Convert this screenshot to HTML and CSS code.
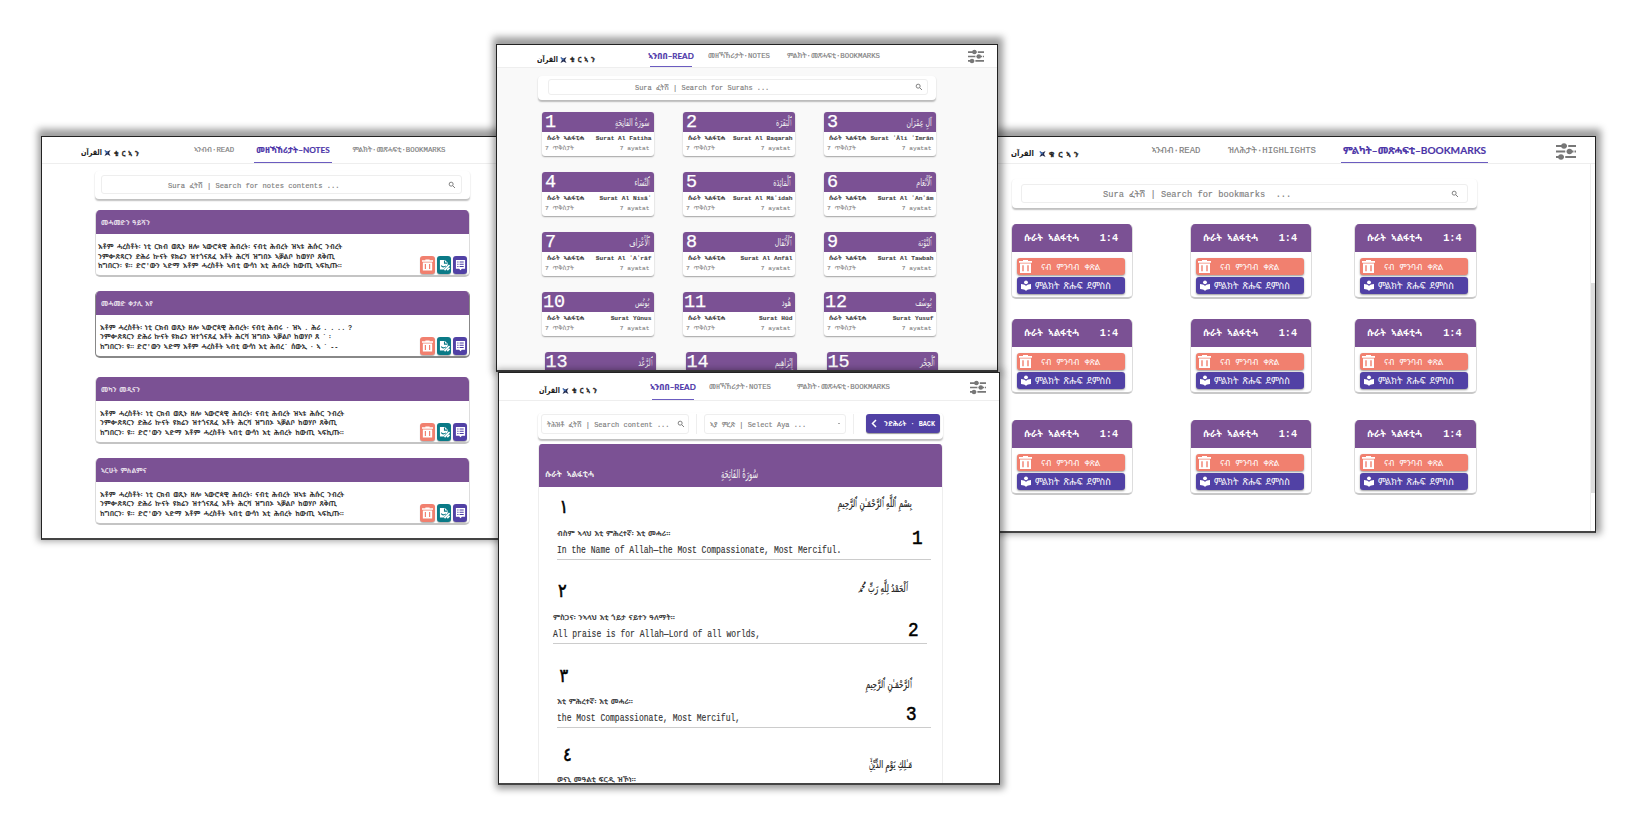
FILE: index.html
```html
<!DOCTYPE html>
<html lang="ti">
<head>
<meta charset="utf-8">
<title>القرآن ቁርኣን</title>
<link rel="stylesheet" href="styles.css">
</head>
<body>
<svg class="defs" aria-hidden="true">
  <symbol id="search" viewBox="0 0 24 24"><path fill="none" stroke="currentColor" stroke-width="2.8" d="M9.5 3.5a6 6 0 1 1 0 12a6 6 0 1 1 0-12M14 14l7 7"/></symbol>
  <symbol id="tune" viewBox="0 0 20 17"><path stroke="currentColor" stroke-width="2" d="M0 3h20M0 8.5h17.500M18.500 8.500h1.500M0 14h20"/><path stroke="#fff" stroke-width="1.500" d="M11.500 1.500v3M10 7v3M8.500 12.500v3"/><circle cx="8" cy="3" r="2.800" fill="currentColor"/><circle cx="13.500" cy="8.500" r="2.800" fill="currentColor"/><circle cx="5" cy="14" r="2.800" fill="currentColor"/></symbol>
  <symbol id="trash" viewBox="0 0 13 13"><path fill="currentColor" fill-rule="evenodd" d="M0 1h4V0h5v1h4v1.700H0zM1 3.500h11V13H1zM3.300 5.200v6h1.400v-6zM8.300 5.200v6h1.400v-6z"/></symbol>
  <symbol id="edit" viewBox="0 0 12 13"><path fill="currentColor" d="M1 1h5.500L9.500 4v2.500L5 11.500H1z"/><path stroke="#0a7a87" stroke-width="1.200" fill="none" d="M6 1.500v3h3M2.500 7c1 2 3 2 5 .500"/><path stroke="currentColor" stroke-width="1.800" d="M6 12l5.500-5.500M9 12l2.500-2.500"/></symbol>
  <symbol id="list" viewBox="0 0 12 13"><path fill="currentColor" d="M1 1h10v9.500H7.500L6 12.200 4.500 10.500H1z"/><path stroke="#4a3aa5" stroke-width="1.100" d="M2.500 3.300h1.300M5 3.300h4.500M2.500 5.700h1.300M5 5.700h4.500M2.500 8.100h1.300M5 8.100h4.500"/></symbol>
  <symbol id="reader" viewBox="0 0 12 11"><circle cx="6" cy="2.300" r="1.900" fill="currentColor"/><path fill="currentColor" d="M1 4c2 0 4 .700 5 1.900C7 4.700 9 4 11 4v5c-2 0-4 .700-5 1.900C5 9.700 3 9 1 9z"/></symbol>
  <symbol id="mark" viewBox="0 0 8 8"><path fill="#222b4d" d="M0 0l4 2 4-2-2 4 2 4-4-2-4 2 2-4z"/><path stroke="#4a7fd0" stroke-width="1.400" d="M.5 1l3.500 3"/></symbol>
</svg>

<section class="window notes">
  <header class="bar">
    <div class="logo"><b>القرآن</b><svg><use href="#mark"/></svg><span>ቁርኣን</span></div>
    <nav><a class="t1">ኣንብብ·READ</a><a class="t2 on">መዘኻኸሪታት–NOTES</a><a class="t3">ምልክት·መጽሓፍቲ·BOOKMARKS</a></nav>
  </header>
  <div class="finder"><div class="field"><span>Sura ፈትሽ | Search for notes contents ...</span><svg><use href="#search"/></svg></div></div>
  <article class="note"><h3>መሓመድን ዓይሻን</h3><div class="nbody"><p>እቶም ሓረስቶት፡ ነቲ ርክብ ወጺኑ ዘሎ ኣውሮጳዊ ሕብረት፡ ናብቲ ሕብረት ዝኣቱ ሕሱር ንብረት<br>ንምቍጽጻርን ድሕሪ ኵናት ዩክሬን ዝተጎናጸፈ እቶት ሕርሻ ዝግበኦ ኣቓልቦ ከወሃቦ ጸቅጢ<br>ከግበርን፡ ዩ። ድሮ'ውን ኣድማ እቶም ሓረስቶት ኣብቲ ውሳነ እቲ ሕብረት ከውጢ ኣፍኪጡ።</p><div class="acts"><i class="del"><svg><use href="#trash"/></svg></i><i class="ed"><svg><use href="#edit"/></svg></i><i class="ls"><svg><use href="#list"/></svg></i></div></div></article>
  <article class="note n2"><h3>መሓመድ ቀታሊ እየ</h3><div class="nbody"><p>እቶም ሓረስቶት፡ ነቲ ርክብ ወጺኑ ዘሎ ኣውሮጳዊ ሕብረት፡ ናብቲ ሕብሩ · ዝኣ . ሕሪ . . .. ?<br>ንምቍጽጻርን ድሕሪ ኵናት ዩክሬን ዝተጎናጸፈ እቶት ሕርሻ ዝግበኦ ኣቓልቦ ከወሃቦ ጸ ˙ ፡<br>ከግበርን፡ ዩ። ድሮ'ውን ኣድማ እቶም ሓረስቶት ኣብቲ ውሳነ እቲ ሕብረ` ሰውኢ · ኣ ˙ --</p><div class="acts"><i class="del"><svg><use href="#trash"/></svg></i><i class="ed"><svg><use href="#edit"/></svg></i><i class="ls"><svg><use href="#list"/></svg></i></div></div></article>
  <article class="note n3"><h3>መካን መዲናን</h3><div class="nbody"><p>እቶም ሓረስቶት፡ ነቲ ርክብ ወጺኑ ዘሎ ኣውሮጳዊ ሕብረት፡ ናብቲ ሕብረት ዝኣቱ ሕሱር ንብረት<br>ንምቍጽጻርን ድሕሪ ኵናት ዩክሬን ዝተጎናጸፈ እቶት ሕርሻ ዝግበኦ ኣቓልቦ ከወሃቦ ጸቅጢ<br>ከግበርን፡ ዩ። ድሮ'ውን ኣድማ እቶም ሓረስቶት ኣብቲ ውሳነ እቲ ሕብረት ከውጢ ኣፍኪጡ።</p><div class="acts"><i class="del"><svg><use href="#trash"/></svg></i><i class="ed"><svg><use href="#edit"/></svg></i><i class="ls"><svg><use href="#list"/></svg></i></div></div></article>
  <article class="note n4"><h3>ኣርሁት ምስልምና</h3><div class="nbody"><p>እቶም ሓረስቶት፡ ነቲ ርክብ ወጺኑ ዘሎ ኣውሮጳዊ ሕብረት፡ ናብቲ ሕብረት ዝኣቱ ሕሱር ንብረት<br>ንምቍጽጻርን ድሕሪ ኵናት ዩክሬን ዝተጎናጸፈ እቶት ሕርሻ ዝግበኦ ኣቓልቦ ከወሃቦ ጸቅጢ<br>ከግበርን፡ ዩ። ድሮ'ውን ኣድማ እቶም ሓረስቶት ኣብቲ ውሳነ እቲ ሕብረት ከውጢ ኣፍኪጡ።</p><div class="acts"><i class="del"><svg><use href="#trash"/></svg></i><i class="ed"><svg><use href="#edit"/></svg></i><i class="ls"><svg><use href="#list"/></svg></i></div></div></article>
</section>

<section class="window marks">
  <header class="bar">
    <div class="logo"><b>القرآن</b><svg><use href="#mark"/></svg><span>ቁርኣን</span></div>
    <nav><a class="t1">ኣንብብ·READ</a><a class="t2">ዝለሕታት·HIGHLIGHTS</a><a class="t3 on">ምልካት–መጽሓፍቲ–BOOKMARKS</a></nav>
    <svg class="tune"><use href="#tune"/></svg>
  </header>
  <div class="finder"><div class="field"><span>Sura ፈትሽ | Search for bookmarks&nbsp; ...</span><svg><use href="#search"/></svg></div></div>
  <div class="mgrid">
    <article class="mark"><h3><span>ሱራት ኣልፋቲሓ</span><b>1:4</b></h3><button class="del"><svg><use href="#trash"/></svg><span>ናብ ምንባብ ቀጽል</span></button><button class="ls"><svg><use href="#reader"/></svg><span>ምልክት ጽሑፍ ደምስስ</span></button></article>
    <article class="mark"><h3><span>ሱራት ኣልፋቲሓ</span><b>1:4</b></h3><button class="del"><svg><use href="#trash"/></svg><span>ናብ ምንባብ ቀጽል</span></button><button class="ls"><svg><use href="#reader"/></svg><span>ምልክት ጽሑፍ ደምስስ</span></button></article>
    <article class="mark"><h3><span>ሱራት ኣልፋቲሓ</span><b>1:4</b></h3><button class="del"><svg><use href="#trash"/></svg><span>ናብ ምንባብ ቀጽል</span></button><button class="ls"><svg><use href="#reader"/></svg><span>ምልክት ጽሑፍ ደምስስ</span></button></article>
    <article class="mark"><h3><span>ሱራት ኣልፋቲሓ</span><b>1:4</b></h3><button class="del"><svg><use href="#trash"/></svg><span>ናብ ምንባብ ቀጽል</span></button><button class="ls"><svg><use href="#reader"/></svg><span>ምልክት ጽሑፍ ደምስስ</span></button></article>
    <article class="mark"><h3><span>ሱራት ኣልፋቲሓ</span><b>1:4</b></h3><button class="del"><svg><use href="#trash"/></svg><span>ናብ ምንባብ ቀጽል</span></button><button class="ls"><svg><use href="#reader"/></svg><span>ምልክት ጽሑፍ ደምስስ</span></button></article>
    <article class="mark"><h3><span>ሱራት ኣልፋቲሓ</span><b>1:4</b></h3><button class="del"><svg><use href="#trash"/></svg><span>ናብ ምንባብ ቀጽል</span></button><button class="ls"><svg><use href="#reader"/></svg><span>ምልክት ጽሑፍ ደምስስ</span></button></article>
    <article class="mark"><h3><span>ሱራት ኣልፋቲሓ</span><b>1:4</b></h3><button class="del"><svg><use href="#trash"/></svg><span>ናብ ምንባብ ቀጽል</span></button><button class="ls"><svg><use href="#reader"/></svg><span>ምልክት ጽሑፍ ደምስስ</span></button></article>
    <article class="mark"><h3><span>ሱራት ኣልፋቲሓ</span><b>1:4</b></h3><button class="del"><svg><use href="#trash"/></svg><span>ናብ ምንባብ ቀጽል</span></button><button class="ls"><svg><use href="#reader"/></svg><span>ምልክት ጽሑፍ ደምስስ</span></button></article>
    <article class="mark"><h3><span>ሱራት ኣልፋቲሓ</span><b>1:4</b></h3><button class="del"><svg><use href="#trash"/></svg><span>ናብ ምንባብ ቀጽል</span></button><button class="ls"><svg><use href="#reader"/></svg><span>ምልክት ጽሑፍ ደምስስ</span></button></article>
  </div>
  <div class="scroll"></div>
</section>

<section class="window read">
  <header class="bar">
    <div class="logo"><b>القرآن</b><svg><use href="#mark"/></svg><span>ቁርኣን</span></div>
    <nav><a class="t1 on">ኣንበበ–READ</a><a class="t2">መዘኻኸሪታት·NOTES</a><a class="t3">ምልክት·መጽሓፍቲ·BOOKMARKS</a></nav>
    <svg class="tune"><use href="#tune"/></svg>
  </header>
  <div class="finder"><div class="field"><span>Sura ፈትሽ | Search for Surahs ...</span><svg><use href="#search"/></svg></div></div>
  <div class="sgrid">
    <article class="sura"><h3><b>1</b><em>سُورَةُ الفَاتِحَةِ</em></h3><p><b>ሱራት ኣልፋቲሓ</b><b>Surat Al Fatiha</b></p><p><span>7 ጥቅስታት</span><span>7 ayatat</span></p></article>
    <article class="sura"><h3><b>2</b><em>ٱلْبَقَرَة</em></h3><p><b>ሱራት ኣልፋቲሓ</b><b>Surat Al Baqarah</b></p><p><span>7 ጥቅስታት</span><span>7 ayatat</span></p></article>
    <article class="sura"><h3><b>3</b><em>آلِ عِمْرَان</em></h3><p><b>ሱራት ኣልፋቲሓ</b><b>Surat ʾĀli ʿImrān</b></p><p><span>7 ጥቅስታት</span><span>7 ayatat</span></p></article>
    <article class="sura"><h3><b>4</b><em>ٱلنِّسَاء</em></h3><p><b>ሱራት ኣልፋቲሓ</b><b>Surat Al Nisāʾ</b></p><p><span>7 ጥቅስታት</span><span>7 ayatat</span></p></article>
    <article class="sura"><h3><b>5</b><em>ٱلْمَائِدَة</em></h3><p><b>ሱራት ኣልፋቲሓ</b><b>Surat Al Māʾidah</b></p><p><span>7 ጥቅስታት</span><span>7 ayatat</span></p></article>
    <article class="sura"><h3><b>6</b><em>ٱلْأَنْعَام</em></h3><p><b>ሱራት ኣልፋቲሓ</b><b>Surat Al ʾAnʿām</b></p><p><span>7 ጥቅስታት</span><span>7 ayatat</span></p></article>
    <article class="sura"><h3><b>7</b><em>ٱلْأَعْرَاف</em></h3><p><b>ሱራት ኣልፋቲሓ</b><b>Surat Al ʾAʿrāf</b></p><p><span>7 ጥቅስታት</span><span>7 ayatat</span></p></article>
    <article class="sura"><h3><b>8</b><em>ٱلْأَنْفَال</em></h3><p><b>ሱራት ኣልፋቲሓ</b><b>Surat Al Anfāl</b></p><p><span>7 ጥቅስታት</span><span>7 ayatat</span></p></article>
    <article class="sura"><h3><b>9</b><em>ٱلتَّوْبَة</em></h3><p><b>ሱራት ኣልፋቲሓ</b><b>Surat Al Tawbah</b></p><p><span>7 ጥቅስታት</span><span>7 ayatat</span></p></article>
    <article class="sura two"><h3><b>10</b><em>يُونُس</em></h3><p><b>ሱራት ኣልፋቲሓ</b><b>Surat Yūnus</b></p><p><span>7 ጥቅስታት</span><span>7 ayatat</span></p></article>
    <article class="sura two"><h3><b>11</b><em>هُود</em></h3><p><b>ሱራት ኣልፋቲሓ</b><b>Surat Hūd</b></p><p><span>7 ጥቅስታት</span><span>7 ayatat</span></p></article>
    <article class="sura two"><h3><b>12</b><em>يُوسُف</em></h3><p><b>ሱራት ኣልፋቲሓ</b><b>Surat Yusuf</b></p><p><span>7 ጥቅስታት</span><span>7 ayatat</span></p></article>
  </div>
  <div class="sgrid last">
    <article class="sura two"><h3><b>13</b><em>ٱلرَّعْد</em></h3></article>
    <article class="sura two"><h3><b>14</b><em>إِبْرَاهِيم</em></h3></article>
    <article class="sura two"><h3><b>15</b><em>ٱلْحِجْر</em></h3></article>
  </div>
</section>

<section class="window verse">
  <header class="bar">
    <div class="logo"><b>القرآن</b><svg><use href="#mark"/></svg><span>ቁርኣን</span></div>
    <nav><a class="t1 on">ኣንበበ–READ</a><a class="t2">መዘኻኸሪታት·NOTES</a><a class="t3">ምልክት·መጽሓፍቲ·BOOKMARKS</a></nav>
    <svg class="tune"><use href="#tune"/></svg>
  </header>
  <div class="finder">
    <div class="field f1"><span>ትሕዝቶ ፈትሽ | Search content ...</span><svg><use href="#search"/></svg></div>
    <i class="rule"></i>
    <div class="field f2"><span>ኣያ ምረጽ | Select Aya ...</span><i class="caret"></i></div>
    <i class="rule"></i>
    <button class="back"><svg viewBox="0 0 6 9"><path d="M5 1L1.500 4.500 5 8" fill="none" stroke="#fff" stroke-width="1.500"/></svg><span>ንድሕሪት · BACK</span></button>
  </div>
  <div class="chapter">
    <h2><span>ሱራት ኣልፋቲሓ</span><em>سُورَةُ الفَاتِحَةِ</em></h2>
    <div class="aya a1"><div class="top"><b>١</b><em>بِسْمِ ٱللَّهِ ٱلرَّحْمَـٰنِ ٱلرَّحِيمِ</em></div><div class="low"><div><p class="ti">ብስም ኣላህ እቲ ምሕረተኛ፡ እቲ መሓሪ።</p><p class="en">In the Name of Allah—the Most Compassionate, Most Merciful.</p></div><b>1</b></div></div>
    <div class="aya a2"><div class="top"><b>٢</b><em>ٱلْحَمْدُ لِلَّهِ رَبِّ ﷴ</em></div><div class="low"><div><p class="ti">ምስጋና፡ ንኣላህ እቲ ጎይታ ናይተን ዓለማት።</p><p class="en">All praise is for Allah—Lord of all worlds,</p></div><b>2</b></div></div>
    <div class="aya a3"><div class="top"><b>٣</b><em>ٱلرَّحْمَـٰنِ ٱلرَّحِيمِ</em></div><div class="low"><div><p class="ti">እቲ ምሕረተኛ፡ እቲ መሓሪ።</p><p class="en">the Most Compassionate, Most Merciful,</p></div><b>3</b></div></div>
    <div class="aya a4"><div class="top"><b>٤</b><em>مَـٰلِكِ يَوْمِ الدِّيْنِۙ</em></div><div class="low"><div><p class="ti">ወናኒ መዓልቲ ፍርዲ ዝኾነ።</p></div></div></div>
  </div>
</section>
</body>
</html>
```
FILE: styles.css
```css
* { box-sizing: border-box; margin: 0; padding: 0; }
body { position: relative; width: 1647px; height: 818px; background: #fff; overflow: hidden; font-family: "Liberation Mono", "Noto Sans Ethiopic", "Noto Sans", monospace; color: #777; }
.defs { position: absolute; width: 0; height: 0; }
em, i { font-style: normal; }
svg { display: block; flex: none; }
button { border: 0; font: inherit; color: #fff; }
span, b, em, a, p { white-space: nowrap; }

/* framed screens on the canvas */
.window { position: absolute; background: #fff; border: 1px solid #222; border-bottom: 2px solid #444; overflow: hidden; box-shadow: 1px -3px 7px 4px rgba(0,0,0,.38); }
.notes { left: 41px; top: 136px; width: 459px; height: 404px; }
.marks { left: 996px; top: 136px; width: 600px; height: 397px; }
.read { left: 496px; top: 44px; width: 502px; height: 328px; background: #f9f9f9; }
.verse { left: 498px; top: 372px; width: 502px; height: 413px; box-shadow: 1px 1px 7px 3px rgba(0,0,0,.4); }

.bar { display: flex; align-items: stretch; height: 27px; background: #fff; border-bottom: 1px solid #eee; }
.logo { display: flex; align-items: center; width: 60px; flex: none; color: #222; height: 24px; padding-top: 8px; }
.logo b { font: bold 8px/10px "DejaVu Sans", sans-serif; width: 23px; transform: scaleX(.8); transform-origin: left; }
.logo svg { width: 7px; height: 6px; margin-right: 3px; }
.logo span { font-size: 6.500px; font-weight: bold; letter-spacing: 3.100px; -webkit-text-stroke: .3px; }
nav { display: flex; flex: none; }
nav a { flex: none; font-size: 7.350px; line-height: 27px; display: flex; justify-content: center; color: #808080; -webkit-text-stroke: .15px; }
nav .on { color: #4c35a8; font-family: Lato, "Noto Sans Ethiopic", sans-serif; font-weight: bold; font-size: 8px; border-bottom: 1px solid #6b5cc0; }
.tune { width: 16px; height: 15px; color: #777; }

.finder { background: #fff; border-radius: 4px; box-shadow: 0 1.500px 1.500px rgba(0,0,0,.25); display: flex; }
.field { display: flex; align-items: center; flex: 1; border: 1px solid #eee; border-radius: 3px; font-size: 6.980px; color: #808080; -webkit-text-stroke: .15px; }
.field span { padding-top: 1px; }
.field svg { width: 8px; height: 8px; margin-left: auto; color: #777; }

.del { background: #f1806f; }
.ed { background: #0a7a87; }
.ls { background: #5141a5; }

/* notes */
.notes .bar { padding-left: 39px; }
.notes .t1 { width: 40px; margin-left: 53px; }
.notes .t2 { width: 78px; margin-left: 20px; font-size: 8.200px; }
.notes .t3 { width: 96px; margin-left: 19px; }
.notes .finder { width: 375px; height: 28px; margin: 7px 0 0 53px; padding: 4px 8px 5px 6px; }
.notes .field { padding: 0 5px 0 66px; font-size: 7.140px; }
.note { width: 375px; height: 67px; margin: 11px 0 0 53px; border-radius: 5px; overflow: hidden; background: #fff; border: 1px solid #ddd; border-top: 0; border-bottom: 2px solid #c4c4c4; }
.n2 { margin-top: 13.500px; border-color: #888; }
.n3 { margin-top: 19px; }
.n4 { margin-top: 14px; }
.note h3 { height: 24px; margin: 0 -1px; background: #7b5194; color: #e6dfea; font-size: 6.800px; line-height: 26px; padding-left: 6px; font-weight: bold; word-spacing: -1.500px; }
.nbody { display: flex; height: 41px; padding: 9px 2px 0 2px; font-size: 6.900px; line-height: 9.600px; color: #333; font-weight: bold; word-spacing: -.95px; }
.n2 p, .n3 p, .n4 p { padding-left: 2px; }
.nbody p { width: 322px; flex: none; }
.n2 p { word-spacing: -1.400px; }
.acts { display: flex; gap: 2px; padding-top: 13px; }
.acts i { display: flex; width: 14px; height: 18px; border-radius: 3px; color: #fff; align-items: center; justify-content: center; box-shadow: 0 1px 1px rgba(0,0,0,.3); }
.acts .del { width: 15px; }
.acts svg { width: 11px; height: 12px; }

/* bookmarks */
.marks .bar { padding-left: 14px; }
.marks .logo { width: 75px; height: 26px; }
.marks .logo b { transform: scaleX(.88); width: 28px; }
.marks .logo span { font-size: 7.500px; letter-spacing: 3.900px; }
.marks nav a { font-size: 8.950px; line-height: 29px; }
.marks nav .t1 { width: 50px; margin-left: 65px; }
.marks nav .t2 { width: 90px; margin-left: 26px; }
.marks nav .t3 { width: 147px; margin-left: 24px; font-size: 10.100px; line-height: 26px; }
.marks .tune { width: 20px; height: 17px; margin: 6px 0 0 68px; }
.marks .finder { width: 465px; height: 29px; margin: 15px 0 0 15px; padding: 5px 9px; }
.marks .field { padding: 0 8px 0 81px; font-size: 8.700px; }
.mgrid { display: grid; grid-template-columns: 122px 122px 122px; grid-template-rows: 75px 75px 76px; column-gap: 57px; row-gap: 20px; margin: 16px 0 0 14px; }
.mark { border-radius: 5px; overflow: hidden; border: 1px solid #ddd; border-top: 0; border-bottom: 2px solid #c8c8c8; }
.mark:nth-child(3n) { margin: 0 15px 0 -15px; width: 122.500px; }
.mark:nth-child(n+7) { margin-top: 6px; height: 75px; }
.mark h3 { display: flex; justify-content: space-between; height: 28px; margin: 0 -1px; background: #7b5194; color: #fff; font-size: 9.200px; line-height: 29px; padding: 0 15px 0 13px; }
.mark h3 b { font-size: 10.200px; }
.mark button { display: flex; align-items: center; width: 108px; height: 17px; border-radius: 3px; margin: 6px 0 0 5px; padding: 0 0 0 2px; font-size: 8.400px; box-shadow: 0 1px 2px rgba(0,0,0,.4); }
.mark button + button { margin-top: 2px; padding-left: 3px; font-size: 9.200px; word-spacing: -1.500px; }
.mark button svg { width: 13px; height: 13px; }
.mark .ls svg { height: 11px; width: 12px; }
.mark button span { padding-left: 9px; }
.mark .ls span { padding-left: 3px; }
.scroll { position: absolute; right: 0; top: 27px; width: 5px; height: 368px; border-left: 1px solid #eee; background: linear-gradient(#ddd, #ddd) 0 119px / 5px 210px no-repeat; }

/* surah list */
.read .bar { height: 23px; padding-left: 40px; }
.read .logo { height: 21px; }
.read nav a { line-height: 23px; }
.read nav a, .verse nav a { font-size: 7.350px; }
.read nav .on, .verse nav .on { font-size: 8px; }
.read .t1, .verse .t1 { width: 42px; margin-left: 53px; }
.read .t2 { width: 61px; margin-left: 16.500px; }
.read .t3 { width: 94px; margin-left: 17px; }
.read .tune { margin: 4px 0 0 87px; }
.read .finder { width: 398px; height: 24px; margin: 8px 0 0 41px; padding: 3px 8px 5px 10px; }
.read .field { padding: 0 4px 0 86px; }
.sgrid { display: grid; grid-template-columns: repeat(3, 111.500px); grid-auto-rows: 44px; column-gap: 29.500px; row-gap: 16px; margin: 12px 0 0 45px; }
.last { margin: 16px 0 0 47.500px; }
.sura { background: #fff; border-radius: 3px; overflow: hidden; box-shadow: 0 1px 1.500px rgba(0,0,0,.35); color: #888; }
.sura h3 { display: flex; justify-content: space-between; align-items: center; height: 20px; background: #7b5194; color: #fff; padding: 1px 4px 0 3px; }
.two h3 { padding-left: 1px; }
.sura h3 b { font: 18.500px/20px "Liberation Mono", monospace; -webkit-text-stroke: .25px; }
.sura h3 em { font: 10px/18px "DejaVu Sans", sans-serif; color: #eee; transform: scaleX(.62); transform-origin: right; }
.sura p { display: flex; justify-content: space-between; font-size: 6.200px; line-height: 10px; padding: 1px 4px 0 3px; -webkit-text-stroke: .1px; }
.sura h3 + p { padding: 2px 2px 0 5px; line-height: 9px; color: #444; }

/* verse reader */
.verse .bar { height: 28px; padding-left: 40px; }
.verse .logo { height: 27px; padding-top: 8px; }
.verse nav a { line-height: 29px; }
.verse .t2 { width: 62px; margin-left: 15px; }
.verse .t3 { width: 95px; margin-left: 25px; }
.verse .tune { margin: 7px 0 0 79px; }
.verse .finder { width: 405px; height: 26px; margin: 12px 0 0 39px; padding: 1px 3px 5px; }
.verse .f1 { flex: 0 0 148px; padding: 0 3px 0 5px; }
.verse .f2 { flex: 0 0 142px; padding: 0 5px; }
.rule { width: 1px; height: 20px; margin: 0 7px; background: #eee; }
.caret { margin-left: auto; border: 1.500px solid transparent; border-top-color: #555; }
.back { display: flex; align-items: center; gap: 7px; width: 74px; height: 19px; margin-left: 5px; padding-left: 5px; border-radius: 3px; background: #5141a5; font-size: 6.800px; font-weight: bold; box-shadow: 0 1px 1px rgba(0,0,0,.4); }
.back svg { width: 6px; height: 9px; }
.chapter { width: 405px; height: 345px; margin: 5px 0 0 39px; border: 1px solid #eee; border-top: 0; border-radius: 4px; overflow: hidden; }
.chapter h2 { display: flex; height: 43px; margin: 0 -1px; background: #7b5194; color: #eee; font-size: 8.200px; line-height: 62px; padding-left: 7px; }
.chapter h2 span { width: 176px; }
.chapter h2 em { font: 12px/60px "DejaVu Sans", sans-serif; transform: scaleX(.56); transform-origin: left; }
.aya { width: 374px; margin-left: 18px; height: 73px; border-bottom: 1px solid #ccc; display: flex; flex-direction: column; justify-content: space-between; color: #222; }
.top, .low { display: flex; justify-content: space-between; }
.top b { font: 19px/24px "DejaVu Sans", sans-serif; padding: 7px 0 0 3px; color: #000; -webkit-text-stroke: .6px; height: 26px; transform: scaleX(.85); transform-origin: left; }
.top em { font: 10.500px/20px "DejaVu Sans", sans-serif; padding: 6px 0 0; margin-right: 19px; height: 26px; transform: scaleX(.68); transform-origin: right; -webkit-text-stroke: .2px; }
.ti { font-size: 7.500px; line-height: 14px; font-weight: bold; color: #444; word-spacing: -1.900px; }
.en { font-size: 8.040px; line-height: 17px; padding-bottom: 1px; transform: scaleY(1.25); color: #333; -webkit-text-stroke: .12px; }
.low > b { font: 21px/24px "Liberation Mono", monospace; color: #000; margin: 0 7px 0 0; -webkit-text-stroke: .6px; transform: scaleX(.84); }
.a2 { height: 84px; padding-top: 11px; margin-left: 14px; }
.a2 .top b { padding-left: 6px; }
.a2 .top em { padding-top: 7px; }
.a2 .low > b { margin-top: 8px; }
.a3 { height: 84px; padding-top: 12px; }
.a3 .top em { padding-top: 18px; }
.a3 .low > b { margin: 8px 13px 0 0; }
.a4 { height: 59px; padding-top: 7px; border: 0; }
.a4 .top b { padding-left: 7px; }
.a4 .top em { padding-top: 19px; }
```
